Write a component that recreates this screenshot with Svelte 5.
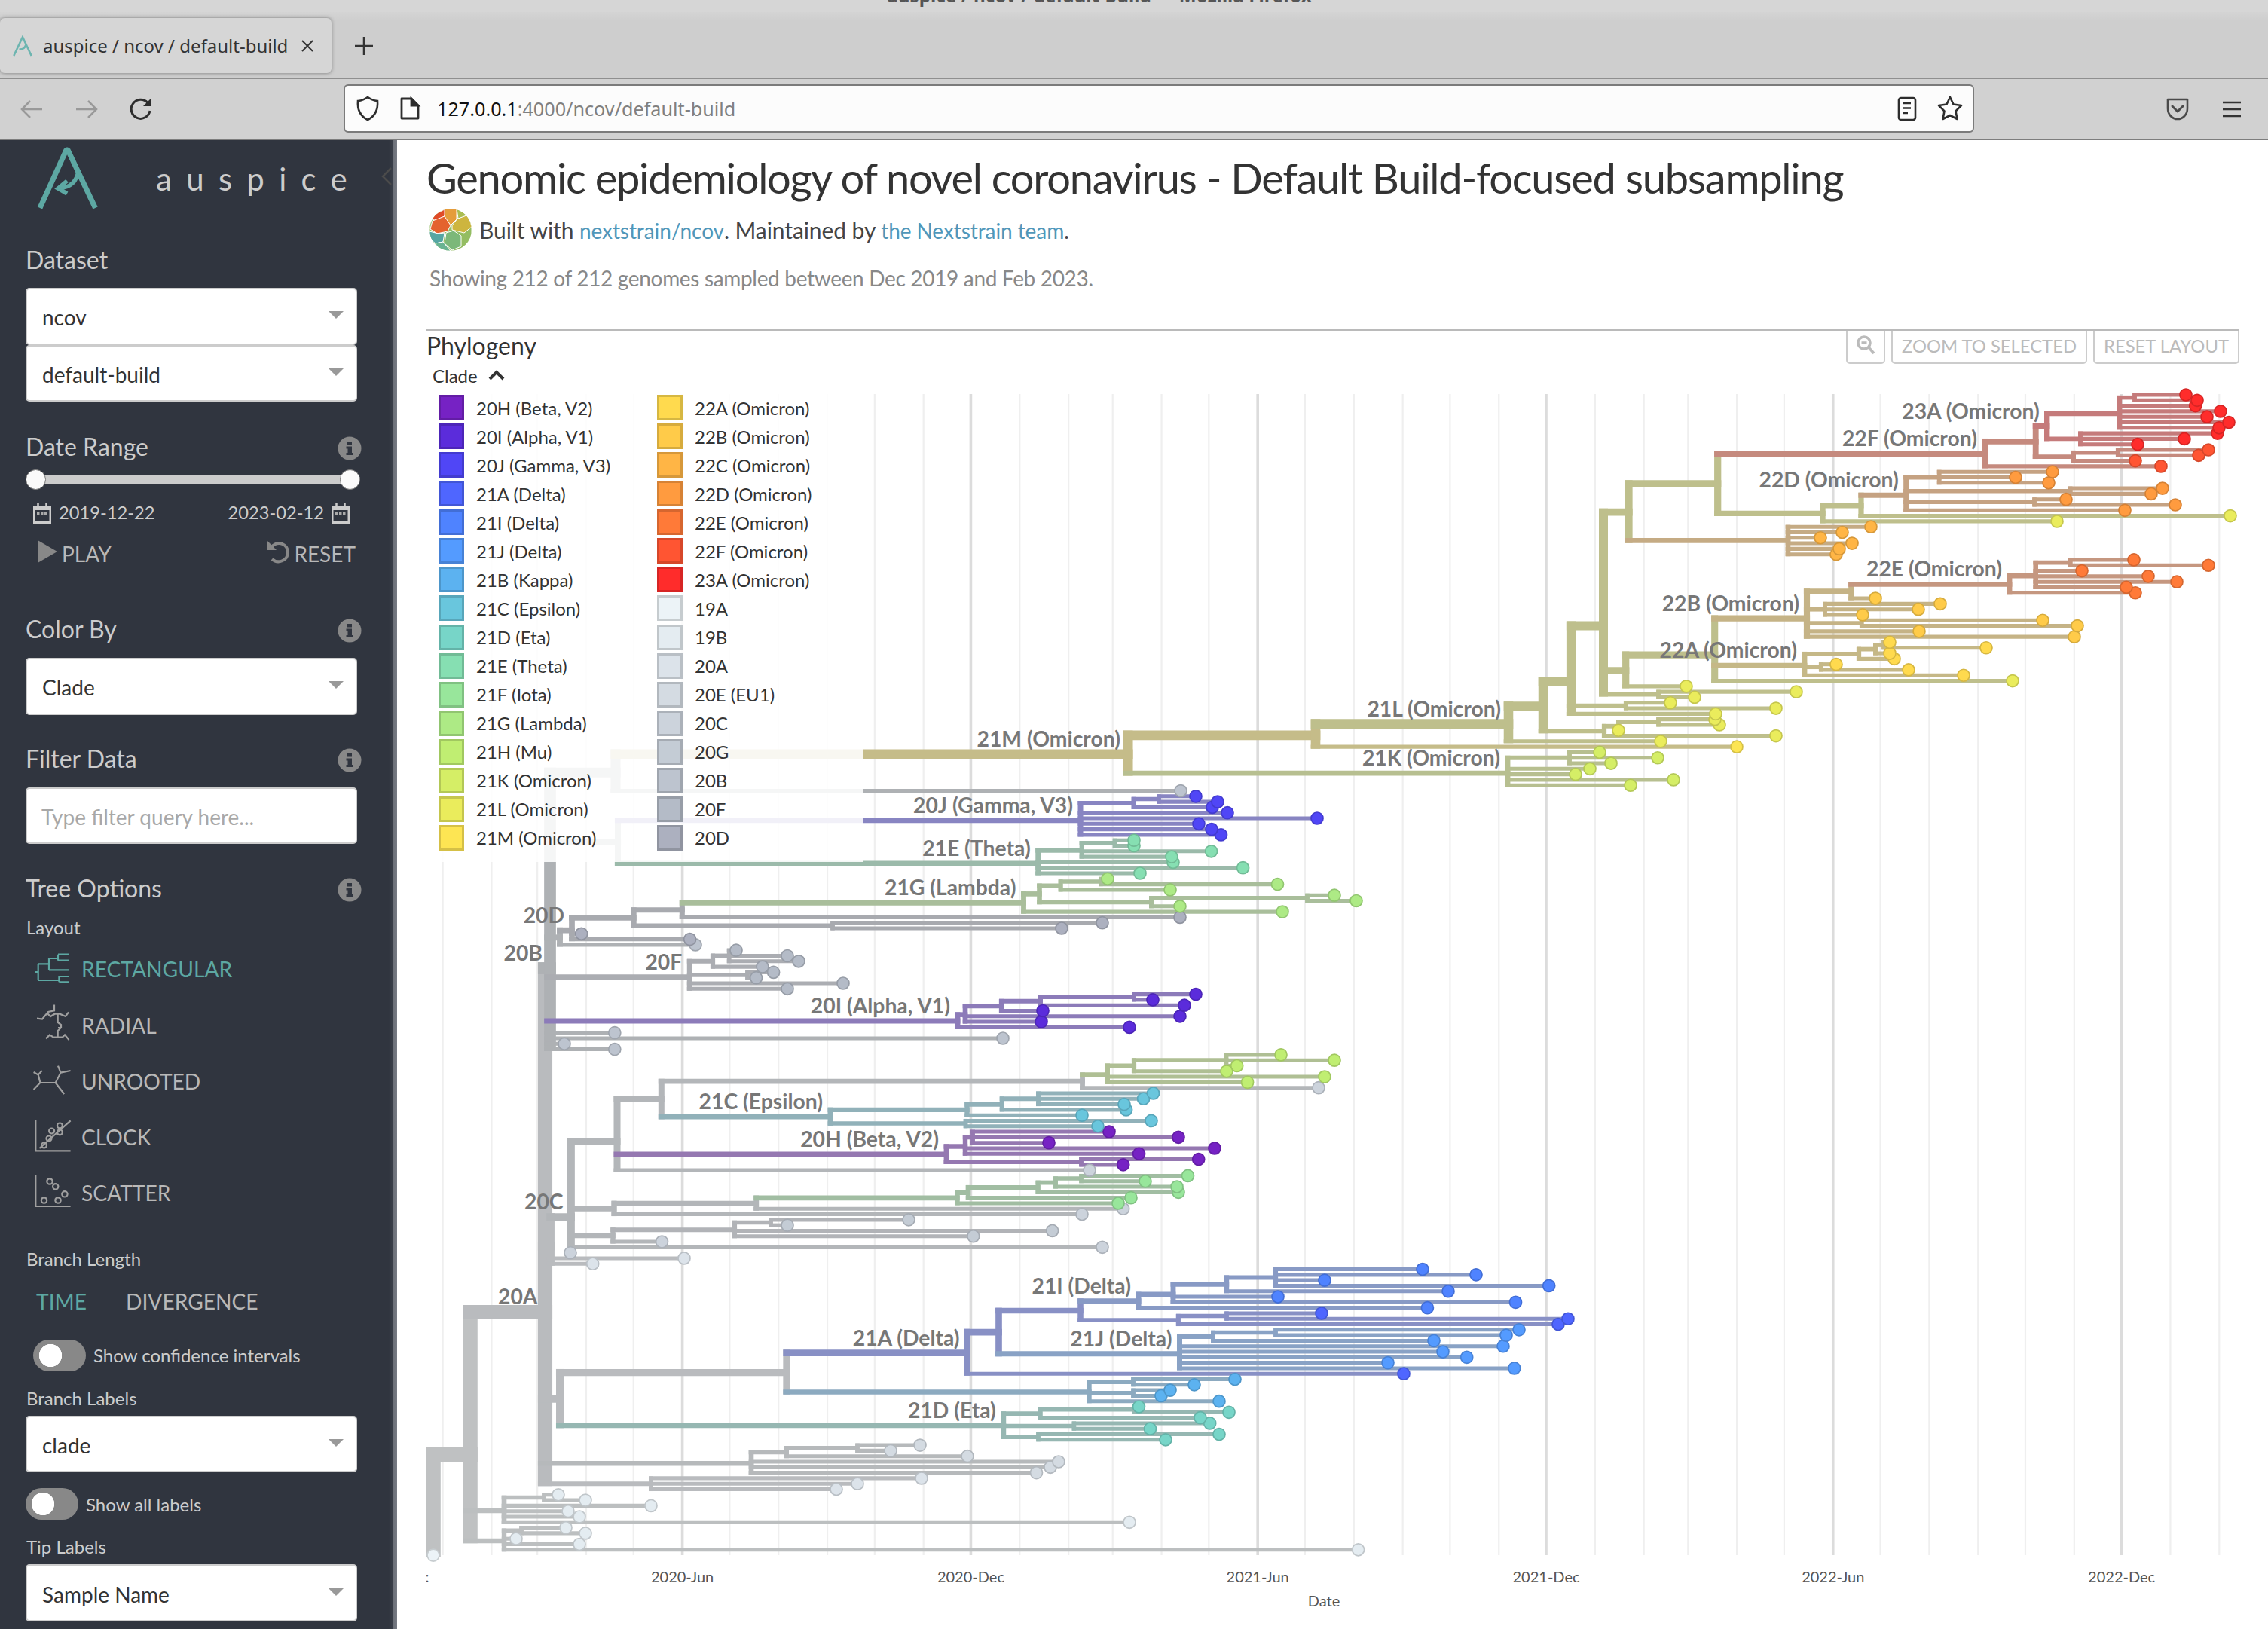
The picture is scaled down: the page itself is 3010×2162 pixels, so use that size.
<script>
  const C = {
    '20H': ['20H (Beta, V2)', '#7622c4'], '20I': ['20I (Alpha, V1)', '#5b2cdb'], '20J': ['20J (Gamma, V3)', '#5046f6'],
    '21A': ['21A (Delta)', '#4f66ff'], '21I': ['21I (Delta)', '#4f83ff'], '21J': ['21J (Delta)', '#549bff'],
    '21B': ['21B (Kappa)', '#5cb2f0'], '21C': ['21C (Epsilon)', '#69c6dd'], '21D': ['21D (Eta)', '#77d5c8'],
    '21E': ['21E (Theta)', '#86dfb2'], '21F': ['21F (Iota)', '#98e69b'], '21G': ['21G (Lambda)', '#adea85'],
    '21H': ['21H (Mu)', '#c0ee72'], '21K': ['21K (Omicron)', '#d5ee66'], '21L': ['21L (Omicron)', '#eaec5c'],
    '21M': ['21M (Omicron)', '#fde553'], '22A': ['22A (Omicron)', '#ffda4e'], '22B': ['22B (Omicron)', '#ffcb49'],
    '22C': ['22C (Omicron)', '#ffb545'], '22D': ['22D (Omicron)', '#ff9b3f'], '22E': ['22E (Omicron)', '#ff7a38'],
    '22F': ['22F (Omicron)', '#ff5532'], '23A': ['23A (Omicron)', '#ff2c2b'],
    '19A': ['19A', '#ecf3f7'], '19B': ['19B', '#e4ecf1'], '20A': ['20A', '#dce3ea'], '20E': ['20E (EU1)', '#d4dbe2'],
    '20C': ['20C', '#ccd3dc'], '20G': ['20G', '#c4ccd5'], '20B': ['20B', '#bdc4cf'], '20F': ['20F', '#b4bbc7'], '20D': ['20D', '#acb0bf']
  };
  const legend = Object.values(C);

  const channels = (hex) => [1, 3, 5].map((i) => parseInt(hex.slice(i, i + 2), 16));
  const muted = (c) => `rgb(${channels(C[c][1]).map((v) => Math.round(v * 0.35 + 108)).join(',')})`;
  const darker = (hex) => `rgb(${channels(hex).map((v) => Math.round(v * 0.84)).join(',')})`;

  // A node is n(x, clade, children, labelled). A bare number is a tip of the same clade; [x, clade] is a tip of another.
  const n = (x, c, k, label = false) => ({ x, c, k, label });

  const omicron = n(1497, '21M', [
    n(1746, '21M', [
      n(2002, '21L', [
        n(2048, '21L', [
          n(2085, '21L', [
            n(2128, '21L', [
              n(2161.7, '21L', [
                n(2279.7, '21L', [
                  n(2634, '22F', [
                    n(2701.7, '22F', [
                      n(2716.7, '23A', [
                        n(2812.7, '23A', [n(2833, '23A', [2901, 2916]), 2913.7, 2947, 2929, 2958, 2945]),
                        n(2761, '23A', [2943, 2899, 2837])
                      ], true),
                      n(2752, '22F', [n(2810.7, '22F', [2931, 2918]), 2834])
                    ]), 2868
                  ], true),
                  n(2419, '21L', [
                    n(2470, '21L', [
                      n(2529.7, '22D', [n(2573.7, '22D', [2724, 2675, 2719]), n(2747.7, '22D', [2870, 2855]), n(2700, '22D', [2742, 2887]), 2820], true),
                      2960
                    ]), 2730
                  ])
                ]),
                n(2373, '22C', [2483, 2445, 2416, 2458, 2441, 2437])
              ]),
              n(2157.7, '21L', [
                n(2275.7, '21L', [
                  n(2398, '22B', [
                    n(2456.7, '22B', [
                      n(2667, '22E', [n(2701.7, '22E', [n(2747.7, '22E', [2832, 2931]), 2763, 2851, 2889, 2822]), 2834], true),
                      2489
                    ]),
                    n(2422, '22B', [2575, 2546, 2472]), n(2470.7, '22B', [2711, 2757]), 2547, 2753
                  ], true),
                  n(2395, '22A', [
                    n(2467, '22A', [n(2489, '22A', [n(2500, '22A', [2508, 2636]), 2508]), 2514]),
                    n(2416.7, '22A', [2437, 2533]), 2606
                  ], true),
                  2671
                ]), 2238
              ]),
              n(2201, '21L', [2384, 2249])
            ]),
            n(2157.7, '21L', [2217, 2357]), 2277
          ]),
          n(2129, '21L', [n(2148, '21L', [n(2201, '21L', [2276, 2282]), 2148]), 2357])
        ]), 2204
      ], true), 2305
    ]),
    n(2001, '21K', [n(2083, '21K', [2123, 2200, 2138]), 2110, 2091, 2221, 2164], true)
  ], true);

  const gamma = n(1434, '20J', [n(1504.6, '20J', [n(1538, '20J', [1587, 1616]), 1609]), 1629, 1748, 1591, 1608, 1620.5], true);
  const theta = n(1377.7, '21E', [n(1435.7, '21E', [n(1479.5, '21E', [1505, 1505]), 1607.6, 1555]), 1557, 1649.6, 1513], true);
  const lambda = n(1358.5, '21G', [
    n(1379.5, '21G', [
      n(1407.6, '21G', [n(1461, '21G', [1470, 1695.5]), 1553]),
      n(1528, '21G', [n(1735, '21G', [1771, 1800]), 1566])
    ]), 1702
  ], true);
  const d20 = n(743, '20B', [
    n(759, '20D', [n(841, '20D', [n(905.3, '20D', [lambda, 1566]), n(1105, '20D', [1463, 1409])]), 771.7, 915.6], true),
    [923, '20B']
  ]);
  const f20 = n(915.3, '20F', [n(946, '20F', [n(967.7, '20F', [977, 1045, 1060]), 1012]), n(992, '20F', [1026.6, 1003.6]), 1119, 1045], true);
  const alpha = n(1271, '20I', [
    n(1281, '20I', [n(1329, '20I', [n(1381, '20I', [n(1505, '20I', [1587, 1530]), 1572]), 1384]), 1566, 1382]), 1499
  ], true);
  const b20 = n(730, '20B', [
    n(817, '20B', [omicron, 1567]), n(820, '20B', [gamma, theta]), d20, f20, alpha, 815.8, 1331, 749, 815.8
  ], true);

  const c20 = n(757.6, '20C', [
    n(819, '20C', [
      n(877.8, '20C', [
        n(1436.5, '20C', [n(1469.7, '21H', [n(1505, '21H', [n(1627.5, '21H', [1700, 1771, 1641.7]), 1628]), 1758, 1655.6]), 1750]),
        n(1102, '21C', [
          n(1283.5, '21C', [n(1329.8, '21C', [n(1378, '21C', [1530.6, 1517.6, 1492]), 1494.6]), 1436]),
          n(1281.5, '21C', [1528, 1457])
        ], true)
      ]),
      n(1256, '20H', [n(1281, '20H', [n(1291, '20H', [1472, 1564, 1392]), 1612, 1511.6]), n(1435, '20H', [1590.7, 1490.7])], true),
      1446
    ]),
    n(815, '20C', [
      n(1003.7, '20C', [
        n(1270.4, '21F', [n(1285, '21F', [n(1377.6, '21F', [n(1401, '21F', [n(1435, '21F', [1576.5, 1520]), 1562]), 1564]), 1501]), 1484]),
        1490.7
      ]), 1436
    ]),
    n(813.5, '20C', [n(975, '20G', [n(1023, '20G', [1206, 1045]), 1396.6, 1291.8]), 878.5]),
    1463, 757
  ], true);

  const delta = n(1283.6, '21A', [
    n(1325.5, '21A', [
      n(1434, '21A', [
        n(1511, '21I', [n(1557, '21I', [n(1628, '21I', [n(1693, '21I', [1888, 1959, 1758, 2055.7]), 1922]), 1696, 2011.5]), 1894.4], true),
        n(1563.8, '21A', [n(1628, '21A', [1754, 2081]), 2068])
      ]),
      n(1565.5, '21J', [n(1610, '21J', [n(1693, '21J', [2016, 1999]), 1903]), 1995, 1915, 1946.7, 1842, 2009.8], true)
    ]), 1863
  ], true);
  const kappa = n(1445.5, '21B', [n(1504, '21B', [1639, 1585]), n(1504, '21B', [1553, 1541]), 1618]);
  const eta = n(1331.8, '21D', [n(1380.6, '21D', [n(1505, '21D', [1511.5, 1631]), 1593]), n(1425.4, '21D', [1605.7, 1526.5]), n(1378, '21D', [1618, 1547])], true);

  const a20 = n(723.5, '20A', [
    b20,
    n(730.6, '20A', [c20, 908, 786.7]),
    n(743, '20A', [n(1044, '20A', [delta, kappa]), eta]),
    n(997, '20E', [n(1044, '20E', [n(1138, '20E', [1221, 1182]), 1284]), 1405, 1394, 1375.5]),
    n(864, '20A', [1223, 1138, 1110])
  ], true);

  const root = n(575, '19A', [
    n(624, '19A', [
      a20,
      n(669, '19B', [n(722, '19B', [741, 777]), 864, 754, 769, 1499]),
      n(669, '19B', [n(692, '19B', [751, 777]), 685, 769, 1802.6])
    ]),
    [575, '19A']
  ]);

  const TOP = 524, STEP = 7.299;
  const width = (count) => 4 + 1.07 * Math.sqrt(count);
  const tips = [], branches = [], labels = [];
  let next = 0;

  function place(node) {
    node.k = node.k.map((k) => {
      const child = typeof k === 'number' ? { x: k, c: node.c, tip: true } : Array.isArray(k) ? { x: k[0], c: k[1], tip: true } : k;
      if (child.tip) {
        child.y = TOP + STEP * next++;
        child.count = 1;
        tips.push(child);
      } else place(child);
      return child;
    });
    node.count = node.k.reduce((s, k) => s + k.count, 0);
    node.y = node.k.reduce((s, k) => s + k.y, 0) / node.k.length;
  }
  function draw(node) {
    const w = width(node.count);
    const a = node.k[0], b = node.k[node.k.length - 1];
    branches.push({ x1: node.x, x2: node.x, y1: a.y - width(a.count) / 2, y2: b.y + width(b.count) / 2, w, s: muted(node.c) });
    for (const k of node.k) {
      branches.push({ x1: node.x - w / 2, x2: k.tip ? k.x : k.x + width(k.count) / 2, y1: k.y, y2: k.y, w: width(k.count), s: muted(k.c) });
    }
    if (node.label) labels.push({ x: node.x - 10, y: node.y - 10, t: C[node.c][0] });
    node.k.filter((k) => !k.tip).forEach(draw);
  }
  place(root);
  draw(root);
  tips.reverse();

  const day = 86400000, june = Date.UTC(2020, 5, 1);
  const grid = [];
  for (let m = 0; m < 38; m++) {
    const t = Date.UTC(2020, m, 1);
    const month = new Date(t).getUTCMonth();
    const year = 2020 + Math.floor(m / 12);
    grid.push({
      x: 905.6 + ((t - june) / day) * 2.092,
      label: month === 5 ? `${year}-Jun` : month === 11 ? `${year}-Dec` : ''
    });
  }
</script>

{#snippet select(text)}
  <div class="select"><span>{text}</span><svg width="20" height="10"><path d="M0 0H20L10 10Z" fill="#999" /></svg></div>
{/snippet}

{#snippet heading(text, info)}
  <div class="heading">
    <span>{text}</span>
    {#if info}
      <svg width="32" height="32" viewBox="0 0 32 32"><circle cx="16" cy="16" r="15.5" fill="#888" /><path d="M13 7h6v4.500h-6zM11.500 13.500h7.500v8.500h2v3h-9.500v-3h2v-5.500h-2z" fill="#30353f" /></svg>
    {/if}
  </div>
{/snippet}

{#snippet calendar()}
  <svg class="cal" width="24" height="27" viewBox="0 0 24 27"><path d="M0 3H24V27H0ZM2.500 9V24H21.500V9Z" fill="#ccc" fill-rule="evenodd" /><path d="M6.500 0V5M17.500 0V5" stroke="#ccc" stroke-width="2.500" /><path d="M5 13.500H19" stroke="#aaa" stroke-width="3.500" stroke-dasharray="3.500 1.500" /></svg>
{/snippet}

<div class="window">
  <div class="titlebar"><span>auspice / ncov / default-build — Mozilla Firefox</span></div>
  <div class="tabs">
    <div class="tab">
      <svg width="26" height="26" viewBox="0 0 80 80" fill="none" stroke="#6db5b0" stroke-width="8"><path d="M4 80L40 4L76 80M54 34C50 50 40 55 26 54" /></svg>
      <span>auspice / ncov / default-build</span>
      <svg class="close" width="18" height="18" viewBox="0 0 18 18" stroke="#333" stroke-width="2"><path d="M2 2L16 16M16 2L2 16" /></svg>
    </div>
    <svg class="plus" width="26" height="26" viewBox="0 0 26 26" stroke="#333" stroke-width="2.500"><path d="M13 1V25M1 13H25" /></svg>
  </div>
  <div class="toolbar">
    <svg class="nav" width="30" height="26" viewBox="0 0 30 26" fill="none" stroke="#999" stroke-width="2.500"><path d="M29 13H2M13 2L2 13L13 24" /></svg>
    <svg class="nav second" width="30" height="26" viewBox="0 0 30 26" fill="none" stroke="#999" stroke-width="2.500"><path d="M1 13H28M17 2L28 13L17 24" /></svg>
    <svg class="reload" width="30" height="30" viewBox="0 0 30 30" fill="none" stroke="#2d2d2d" stroke-width="3"><path d="M27 17A12.500 12.500 0 1 1 24 6.500" /><path d="M28 1V11H18Z" fill="#2d2d2d" stroke="none" /></svg>
    <div class="url">
      <svg width="30" height="34" viewBox="0 0 30 34" fill="none" stroke="#2d2d2d" stroke-width="2.600"><path d="M15 2C19 5 23 6.500 28 7C29 19 25 27 15 32C5 27 1 19 2 7C7 6.500 11 5 15 2Z" /></svg>
      <svg class="page" width="26" height="30" viewBox="0 0 26 30" fill="none" stroke="#2d2d2d" stroke-width="2.800"><path d="M4 2H15L24 11V28H2V2Z" stroke-linejoin="round" /><path d="M15 2V11H24Z" fill="#2d2d2d" /></svg>
      <span class="addr"><b>127.0.0.1</b>:4000/ncov/default-build</span>
      <svg width="26" height="34" viewBox="0 0 26 34" fill="none" stroke="#2d2d2d" stroke-width="2.600"><rect x="2" y="3" width="22" height="29" rx="3" /><path d="M7 10H18M7 16.500H18M7 23H14" /></svg>
      <svg class="star" width="34" height="34" viewBox="0 0 34 34" fill="none" stroke="#2d2d2d" stroke-width="2.600" stroke-linejoin="round"><path d="M17 2L21.500 11.500L32 13L24.500 20.500L26.500 31L17 26L7.500 31L9.500 20.500L2 13L12.500 11.500Z" /></svg>
    </div>
    <svg class="pocket" width="30" height="30" viewBox="0 0 30 30" fill="none" stroke="#4a4a4a" stroke-width="2.600" stroke-linejoin="round"><path d="M2 2H28V14C28 22 22 28 15 28C8 28 2 22 2 14Z" /><path d="M8 11L15 18L22 11" stroke-width="3" stroke-linecap="round" /></svg>
    <svg class="menu" width="24" height="22" viewBox="0 0 24 22" stroke="#333" stroke-width="2.600"><path d="M0 2H24M0 11H24M0 20H24" /></svg>
  </div>

  <div class="body">
    <aside>
      <div class="brand">
        <svg width="84" height="84" viewBox="0 0 84 84" fill="none" stroke="#5da8a3" stroke-width="7"><path d="M5 82L40 5H42L78.500 82" stroke-linejoin="bevel" /><path d="M56 32C54 48 45 55 30 56" stroke-width="5.500" /><path d="M41 46L29 56L41 63" stroke-width="5.500" /></svg>
        <span>auspice</span>
        <svg class="chev" width="14" height="24" viewBox="0 0 14 24" fill="none" stroke="#4b4b4b" stroke-width="2.500"><path d="M13 1L2 12L13 23" /></svg>
      </div>

      <div class="g-dataset">{@render heading('Dataset', false)}</div>
      <div class="gap18">{@render select('ncov')}{@render select('default-build')}</div>

      <div class="gap39">{@render heading('Date Range', true)}</div>
      <div class="slider"><i></i><b class="from"></b><b class="to"></b></div>
      <div class="dates"><div>{@render calendar()}<span>2019-12-22</span></div><div><span>2023-02-12</span>{@render calendar()}</div></div>
      <div class="play">
        <div><svg width="26" height="30" viewBox="0 0 26 30"><path d="M0 0L26 15L0 30Z" fill="#888" /></svg><span>PLAY</span></div>
        <div><svg width="29" height="29" viewBox="0 0 29 29" fill="none" stroke="#888" stroke-width="4"><path d="M5 8C15 -2 27 5 27 15C27 26 14 31 6 24" /><path d="M0 0V12H12Z" fill="#888" stroke="none" /></svg><span>RESET</span></div>
      </div>

      <div class="gap44">{@render heading('Color By', true)}</div>
      <div class="gap19">{@render select('Clade')}</div>

      <div class="gap38">{@render heading('Filter Data', true)}</div>
      <div class="gap18"><div class="select placeholder"><span>Type filter query here...</span></div></div>

      <div class="gap38">{@render heading('Tree Options', true)}</div>
      <div class="sub layout-title">Layout</div>
      <div class="layouts">
        <div class="on"><svg width="48" height="48"><path d="M.7 28H4.700M4.700 17.300V39M4.700 17.300H19M19 10V25.300M19 10H31M31 4.700V12.700M31 4.700H46M31 12.700H46M19 25.300H46M4.700 39H32.400M32.400 34V41.300M32.400 34H46M32.400 41.300H46" /></svg>RECTANGULAR</div>
        <div><svg width="48" height="48"><path d="M3 14.700L10 15.500L18 6L26 4.400V-3.600M17 8L21 12L26.700 8.700H33.400L41 12L45 6.400M30.700 8.700V20L35 23V27H31M35 27L30.700 31V40.400M15 41.400L20 36.400L25 39.700H36.800L40 36.400L45.500 43" /></svg>RADIAL</div>
        <div><svg width="48" height="48"><path d="M-1.400 12L4.700 15.400L9.800 10M4.700 15.400L7.400 26L-1.400 35M7.400 26H27.700L34.500 12.700L31 3.700M34.500 12.700L47.600 10M27.700 26L39.200 41" /></svg>UNROOTED</div>
        <div><svg width="48" height="48"><path d="M1.300 1V42.400H47.600M6.400 39L47.600 2.400" /><circle cx="33.400" cy="9" r="3.500" /><circle cx="22.600" cy="16" r="3.500" /><circle cx="33.400" cy="17.800" r="3.500" /><circle cx="19" cy="26" r="3.500" /><circle cx="12.500" cy="35" r="3.500" /></svg>CLOCK</div>
        <div><svg width="48" height="48"><path d="M1.300 1V42H47.600" /><circle cx="20" cy="9" r="3.700" /><circle cx="27.700" cy="15.800" r="3.700" /><circle cx="39.900" cy="25.800" r="3.700" /><circle cx="31" cy="34" r="3.700" /><circle cx="12.500" cy="34" r="3.700" /></svg>SCATTER</div>
      </div>

      <div class="sub length-title">Branch Length</div>
      <div class="length"><span class="on">TIME</span><span>DIVERGENCE</span></div>
      <div class="toggle inset"><i></i>Show confidence intervals</div>
      <div class="sub labels-title">Branch Labels</div>
      <div class="gap9">{@render select('clade')}</div>
      <div class="toggle"><i></i>Show all labels</div>
      <div class="sub labels-title">Tip Labels</div>
      <div class="gap9">{@render select('Sample Name')}</div>
    </aside>

    <main>
      <h1>Genomic epidemiology of novel coronavirus - Default Build-focused subsampling</h1>
      <div class="byline">
        <svg width="56" height="56" viewBox="0 0 56 56">
          <defs><clipPath id="disc"><circle cx="28" cy="28" r="28" /></clipPath></defs>
          <g clip-path="url(#disc)" stroke="#fff" stroke-width="1">
            <rect width="56" height="56" fill="#94bd62" />
            <path d="M0 12L14 4L22 0L20 10L8 16Z" fill="#e04b28" />
            <path d="M20 -2H36V14L28 22L20 12Z" fill="#e59c3b" />
            <path d="M4 16L20 10L28 22L24 30L10 33L1 27Z" fill="#e4632e" />
            <path d="M38 12L52 8L56 24L46 32L30 28L30 22Z" fill="#cdb53f" />
            <path d="M36 0L52 8L38 13Z" fill="#aabd52" />
            <path d="M0 30L12 33L20 32L18 44L8 46L0 40Z" fill="#56a6a2" />
            <path d="M22 32L32 29L42 36L42 50L30 55L20 46Z" fill="#7cb879" />
            <path d="M8 46L18 44L28 56H12Z" fill="#69b391" />
          </g>
        </svg>
        <p>Built with <a href="#ncov">nextstrain/ncov</a>. Maintained by <a href="#team">the Nextstrain team</a>.</p>
      </div>
      <p class="showing">Showing 212 of 212 genomes sampled between Dec 2019 and Feb 2023.</p>

      <section class="card">
        <div class="cardhead">
          <h2>Phylogeny</h2>
          <div class="buttons">
            <span class="btn zoom"><svg width="24" height="28" viewBox="0 0 24 28" fill="none" stroke="#bbb" stroke-width="3.500"><circle cx="10" cy="11" r="8" /><path d="M16 17L23 25M6.500 11H13.500" /></svg></span>
            <span class="btn wide">ZOOM TO SELECTED</span>
            <span class="btn reset">RESET LAYOUT</span>
          </div>
        </div>
        <div class="legend-title">Clade <svg width="22" height="14" viewBox="0 0 22 14" fill="none" stroke="#333" stroke-width="4"><path d="M2 12L11 3L20 12" /></svg></div>

        <div class="chart">
          <svg class="tree" width="2444" height="1642" viewBox="566 520 2444 1642">
            {#each grid as g}
              <line x1={g.x} x2={g.x} y1="523" y2="2064" stroke={g.label ? '#dcdcdc' : '#efefef'} stroke-width={g.label ? 3.6 : 2.2} />
              {#if g.label}<text class="tick" x={g.x} y="2100">{g.label}</text>{/if}
            {/each}
            <text class="tick" x="567" y="2100">:</text>
            <text class="tick" x="1757" y="2132">Date</text>
            {#each branches as b}
              <line x1={b.x1} x2={b.x2} y1={b.y1} y2={b.y2} stroke={b.s} stroke-width={b.w} />
            {/each}
            {#each tips as t}
              <circle cx={t.x} cy={t.y} r="8" fill={C[t.c][1]} stroke={darker(C[t.c][1])} stroke-width="1.700" />
            {/each}
            {#each labels as l}
              <text class="clade" x={l.x} y={l.y}>{l.t}</text>
            {/each}
          </svg>
          <div class="legend">
            {#each legend as [name, color]}
              <div class="item"><i style:background={color} style:border-color={darker(color)}></i>{name}</div>
            {/each}
          </div>
        </div>
      </section>
    </main>
  </div>
</div>

<style>
  :global(body) { margin: 0; background: #fff; }
  .window { width: 3010px; height: 2162px; overflow: hidden; display: flex; flex-direction: column; font-family: Lato, sans-serif; }
  svg { display: block; flex: none; overflow: visible; }

  .titlebar { height: 16px; background: #d6d6d6; overflow: hidden; display: flex; justify-content: center; font: bold 24.300px/24px "Noto Sans", sans-serif; color: #555; }
  .titlebar span { margin: -18px 92px 0 0; }
  .tabs { height: 87px; background: linear-gradient(#d4d4d4, #cecece 12px); display: flex; align-items: flex-start; border-bottom: 2px solid #8f8f8f; }
  .tab { box-sizing: border-box; margin-top: 8px; width: 440px; height: 73px; background: #d6d6d6; border-radius: 6px; box-shadow: 0 0 5px #777; display: flex; align-items: center; padding-left: 17px; font: 24px "Noto Sans", sans-serif; color: #333; }
  .tab span { margin-left: 14px; width: 330px; white-space: nowrap; }
  .close { margin-left: 12px; }
  .plus { margin: 32px 0 0 30px; }
  .toolbar { height: 79px; background: #d1d1d1; border-bottom: 2px solid #7d7d7d; display: flex; align-items: center; }
  .nav { margin-left: 27px; }
  .second { margin-left: 43px; }
  .reload { margin-left: 42px; }
  .url { box-sizing: border-box; margin: -1px 0 0 254px; width: 2164px; height: 64px; border: 2px solid #7b7b7b; border-radius: 6px; background: #fcfcfc; display: flex; align-items: center; padding: 0 13px 0 15px; font: 25.200px "Noto Sans", sans-serif; color: #808080; }
  .url b { font-weight: normal; color: #111; }
  .page { margin: 0 23px 0 28px; }
  .addr { flex: 1; }
  .star { margin-left: 27px; }
  .pocket { margin-left: 255px; }
  .menu { margin-left: 45px; }

  .body { flex: 1; display: flex; min-height: 0; }
  aside { box-sizing: border-box; width: 527px; padding: 0 53px 0 34px; background: linear-gradient(90deg, #30353f 516px, #3a3f49 521px, #6c7078 522px, #777b84 527px); color: #ccc; overflow: hidden; flex: none; }
  .brand { height: 104px; display: flex; align-items: flex-start; margin-right: -50px; }
  .brand svg { margin: 8px 0 0 14px; }
  .brand span { font-size: 42px; line-height: 50px; letter-spacing: 19.300px; margin: 26px 0 0 75px; width: 285px; }
  .brand .chev { margin: 36px 0 0 14px; }
  .heading { height: 40px; line-height: 41px; font-size: 32px; display: flex; justify-content: space-between; align-items: center; padding: 0; margin-right: -6px; }
  .heading svg { margin-top: 5px; }
  .g-dataset { margin-top: 34px; }
  .gap9 { margin-top: 8.300px; }
  .gap18 { margin-top: 18px; }
  .gap19 { margin-top: 19px; }
  .gap38 { margin-top: 38px; }
  .gap39 { margin-top: 39px; }
  .gap44 { margin-top: 44px; }
  .select { box-sizing: border-box; height: 75.600px; border: 2px solid #ccc; border-radius: 5px; background: #fff; color: #333; font-size: 28px; display: flex; align-items: center; justify-content: space-between; padding: 3px 16px 0 20px; }
  .select svg { margin-top: -6px; }
  .placeholder { color: #a8a8a8; padding-left: 19px; }
  .slider { height: 48px; display: grid; grid-template-columns: 1fr 1fr; align-items: center; margin-right: -4px; }
  .slider i { grid-area: 1 / 1 / 2 / 3; height: 12px; background: #ccc; border-radius: 6px; }
  .slider b { width: 25px; height: 25px; border-radius: 50%; background: #fafafa; border: 1px solid #777; }
  .slider .from { grid-area: 1 / 1; }
  .slider .to { grid-area: 1 / 2; justify-self: end; }
  .dates { height: 40px; display: flex; justify-content: space-between; align-items: center; padding: 0 10px; font-size: 23.700px; }
  .dates div { display: flex; align-items: center; gap: 10px; }
  .cal { margin-top: 2px; }
  .play { height: 70px; display: flex; justify-content: space-between; align-items: center; padding: 0 2px 0 16px; font-size: 28px; color: #b8b8b8; }
  .play div { display: flex; align-items: center; gap: 6px; }
  .play svg { margin-top: -6px; }
  .sub { height: 32px; line-height: 33px; font-size: 24px; padding-left: 1px; color: #ccc; }
  .layout-title { margin-top: 16px; }
  .layouts { margin-top: 3px; font-size: 28.200px; color: #b8b8b8; }
  .layouts div { height: 74.200px; display: flex; align-items: center; padding-left: 12px; gap: 14px; }
  .layouts svg { fill: none; stroke: #a0a0a0; stroke-width: 2.200; }
  .on, .layouts .on { color: #5da8a3; }
  .layouts .on svg { stroke: #5da8a3; }
  .length-title { margin-top: 33.500px; }
  .length { margin-top: 16px; height: 50px; display: flex; align-items: center; gap: 52px; padding-left: 14px; font-size: 28.200px; color: #b8b8b8; }
  .labels-title { margin-top: 18.700px; }
  .toggle { margin-top: 21px; height: 42px; display: flex; align-items: center; font-size: 24px; gap: 10px; line-height: 49px; }
  .inset { margin: 26px 0 0 10px; }
  .toggle i { box-sizing: border-box; width: 70px; height: 42px; border-radius: 21px; background: radial-gradient(circle at 23px 21px, #fff 14.800px, #888 15.500px); }

  main { flex: 1; min-width: 0; padding-left: 39px; color: #333; }
  h1 { margin: 16px 0 0; font-weight: 400; font-size: 56px; line-height: 68px; letter-spacing: -1.260px; white-space: nowrap; }
  .byline { display: flex; align-items: center; height: 60px; margin: 5px 0 0 4px; gap: 10px; }
  .byline p { margin: 0; font-size: 30px; letter-spacing: -.080px; color: #444; white-space: nowrap; }
  .byline a { color: #5097ba; text-decoration: none; font-size: 28px; }
  .showing { margin: 14px 0 0 4px; height: 40px; line-height: 40px; font-size: 28px; letter-spacing: -.330px; color: #888; }
  .card { margin-top: 47px; border-top: 3px solid #bababa; width: 2406px; }
  .cardhead { height: 45px; display: flex; justify-content: space-between; align-items: flex-start; }
  h2 { margin: 0; font-weight: 400; font-size: 32px; line-height: 39px; }
  .buttons { display: flex; gap: 8px; }
  .btn { box-sizing: border-box; height: 44px; border: 2px solid #ccc; border-top: 0; border-radius: 0 0 5px 5px; text-align: center; font-size: 23.800px; line-height: 41px; color: #bbb; }
  .zoom { width: 52px; padding-left: 12px; }
  .zoom svg { margin-top: 5px; }
  .wide { width: 260px; }
  .reset { width: 194px; }
  .legend-title { height: 36px; line-height: 29px; margin-left: 8px; display: flex; gap: 14px; font-size: 24px; }
  .legend-title svg { margin-top: 7px; }
  .chart { position: relative; }
  .tick { font-size: 20px; text-anchor: middle; fill: #555; }
  .clade { font-size: 28.300px; font-weight: 700; text-anchor: end; fill: #777; }
  .legend { position: absolute; left: 4px; top: 0; width: 575px; height: 624px; box-sizing: border-box; padding: 2px 0 0 12px; background: rgba(255, 255, 255, .88); display: grid; grid-template-rows: repeat(16, 38.070px); grid-auto-flow: column; grid-template-columns: 290px 280px; font-size: 24px; color: #333; }
  .item { display: flex; align-items: center; gap: 16px; }
  .item i { box-sizing: border-box; width: 34px; height: 34px; border: 3px solid; }
</style>
